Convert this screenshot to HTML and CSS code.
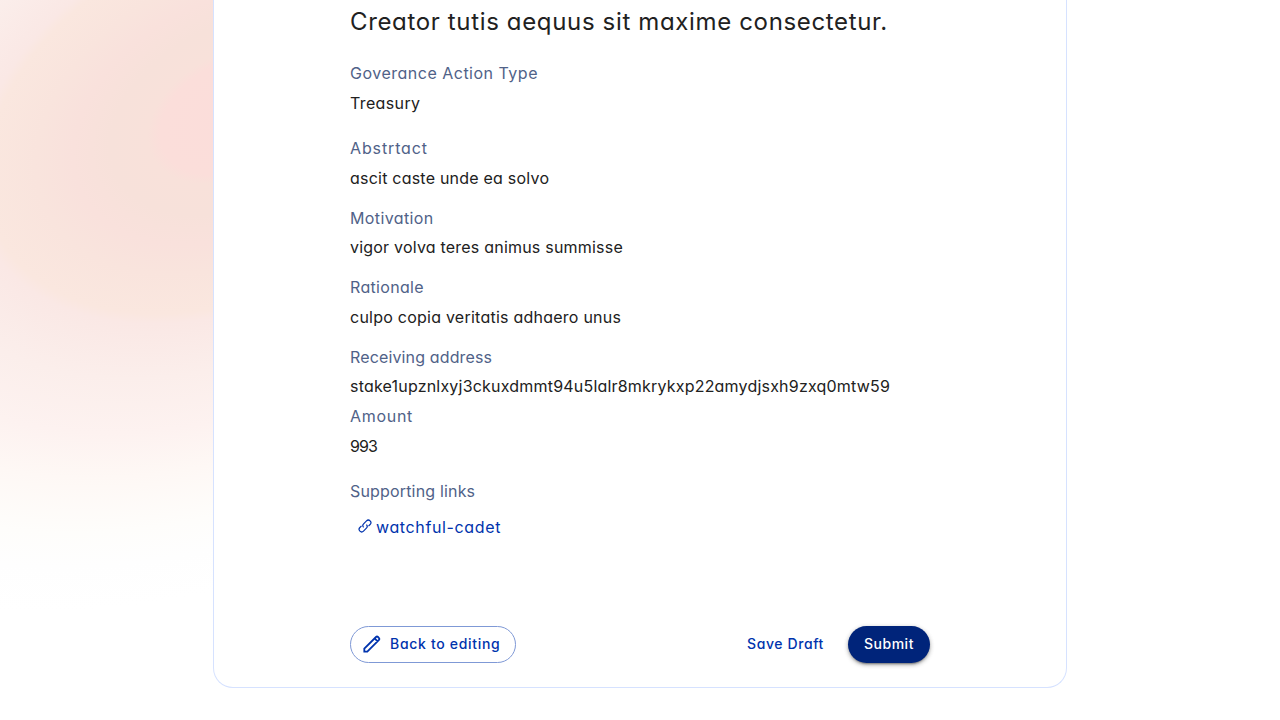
FILE: index.html
```html
<!DOCTYPE html>
<html lang="en">
<head>
<meta charset="utf-8">
<title>Governance action review</title>
<link rel="stylesheet" href="styles.css">
</head>
<body>
<div class="page">
<div class="glow"></div>
<main class="card">
  <h1 class="title">Creator tutis aequus sit maxime consectetur.</h1>
  <section class="field field-type"><h2 class="label label-type">Goverance Action Type</h2><p class="value value-type">Treasury</p></section>
  <section class="field"><h2 class="label label-abstract">Abstrtact</h2><p class="value value-abstract">ascit caste unde ea solvo</p></section>
  <section class="field"><h2 class="label label-motivation">Motivation</h2><p class="value value-motivation">vigor volva teres animus summisse</p></section>
  <section class="field"><h2 class="label label-rationale">Rationale</h2><p class="value value-rationale">culpo copia veritatis adhaero unus</p></section>
  <section class="field field-address"><h2 class="label label-address">Receiving address</h2><p class="value value-address">stake1upznlxyj3ckuxdmmt94u5lalr8mkrykxp22amydjsxh9zxq0mtw59</p></section>
  <section class="field field-amount"><h2 class="label label-amount">Amount</h2><p class="value value-amount">993</p></section>
  <section class="links"><h2 class="label label-links">Supporting links</h2>
    <a class="link"><svg class="link-icon" viewBox="0 0 14 14"><path d="M5.600 8.400A2.600 2.600 0 0 1 5.600 4.800L8.500 1.900A2.500 2.500 0 0 1 12.100 5.500L10.500 7.100M8.400 5.600A2.600 2.600 0 0 1 8.400 9.200L5.500 12.100A2.500 2.500 0 0 1 1.900 8.500L3.500 6.900"/></svg><span class="link-text">watchful-cadet</span></a>
  </section>
  <footer class="actions">
    <button class="button button-back"><svg class="pencil" viewBox="0 0 20 20"><path d="M2.300 17.700v-3L14 3q1-.9 2 0l1 1q.9 1 0 2L5.300 17.700zM12.600 4.400l3 3"/></svg><span class="text-back">Back to editing</span></button>
    <div class="actions-right"><button class="button button-draft">Save Draft</button><button class="button button-submit">Submit</button></div>
  </footer>
</main>
</div>
</body>
</html>
```
FILE: styles.css
```css
* { box-sizing: border-box; }
body { margin: 0; font-family: Inter, "Open Sans", sans-serif; font-feature-settings: "cv11"; color: #212121; }
.page { position: relative; height: 720px; overflow: hidden; background: #fff; }
.glow { position: absolute; left: -427px; top: -329px; width: 1324px; height: 888px; transform: rotate(-27deg); background: radial-gradient(ellipse closest-side, #fbddda 0%, #fbdeda 12%, #f8e1da 14%, #f7e1da 20%, #f9e1dc 26%, #f9e4dd 32%, #fae7df 40%, #fae8e5 42%, #fbeeeb 53%, #fdf2f0 64%, #fef8f5 73%, #fefdfb 84%, #fefefe 91%, #fff 100%); }
.card { position: relative; width: 854px; height: 688px; margin: 0 auto; padding: 0 136px; background: #fff; border: 1px solid #d6e2ff; border-top: 0; border-radius: 0 0 20px 20px; display: flex; flex-direction: column; white-space: nowrap; }
.title { margin: 4px 0 21px; font-size: 24px; line-height: 36px; font-weight: 400; letter-spacing: .65px; }
.label, .value { margin: 0; font-size: 16px; line-height: 24px; font-weight: 400; }
.label { color: #506288; margin-bottom: 5.7px; }
.field { margin-bottom: 15.8px; }
.field-type { margin-bottom: 21.5px; }
.field-address { margin-bottom: 5.5px; }
.field-amount { margin-bottom: 21.5px; }
.label-type { letter-spacing: .5px; }
.value-type { letter-spacing: .37px; }
.label-abstract { letter-spacing: .87px; }
.value-abstract { letter-spacing: .22px; }
.label-motivation { letter-spacing: .38px; }
.value-motivation { letter-spacing: .21px; }
.label-rationale { letter-spacing: .33px; }
.value-rationale { letter-spacing: .24px; }
.label-address { letter-spacing: .14px; }
.value-address { letter-spacing: .2px; }
.label-amount { letter-spacing: .7px; }
.value-amount { letter-spacing: -.9px; }
.label-links { letter-spacing: .17px; }
.link { display: flex; align-items: center; gap: 4px; padding: 6px 8px; color: #0033ad; font-size: 16px; line-height: 24px; letter-spacing: .63px; }
.link-icon { width: 14px; height: 14px; margin-top: -2px; fill: none; stroke: currentColor; stroke-width: 1.2; }
.actions { display: flex; justify-content: space-between; margin-top: auto; margin-bottom: 24px; width: 580px; }
.actions-right { display: flex; gap: 8px; }
.button { height: 37px; border: 0; border-radius: 19px; padding: 0 16px 2px; background: none; color: #0033ad; font: 500 14px/24px Inter, sans-serif; font-feature-settings: "cv11"; }
.button-back { width: 166px; border: 1px solid #7f99d6; display: flex; align-items: center; gap: 8px; padding: 0 0 1px 11px; letter-spacing: .69px; }
.pencil { width: 20px; height: 20px; fill: none; stroke: currentColor; stroke-width: 1.8; }
.button-draft { width: 109px; letter-spacing: .6px; }
.button-submit { width: 82px; letter-spacing: .5px; background: #00247a; color: #fff; box-shadow: 0 3px 1px -2px #0003, 0 2px 2px #00000024, 0 1px 5px #0000001f, 0 2px 5px #0003; }
```
